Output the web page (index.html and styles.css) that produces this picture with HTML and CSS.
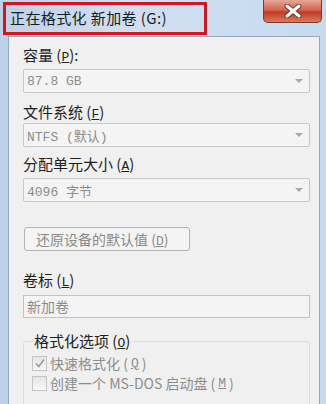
FILE: index.html
```html
<!DOCTYPE html>
<html lang="zh-CN">
<head>
  <meta charset="UTF-8" />
  <title>格式化 新加卷 (G:)</title>
  <link rel="stylesheet" href="styles.css">
</head>
<body>
  <div class="window">
    <div class="titlebar">
      <span class="title">正在格式化 新加卷 (G:)</span>
      <div class="close">
        <svg width="22" height="14" viewBox="0 0 22 14">
          <path d="M5 2 L17 12 M17 2 L5 12" stroke="#6b3a34" stroke-width="5" stroke-linecap="round"/>
          <path d="M5 2 L17 12 M17 2 L5 12" stroke="#ffffff" stroke-width="3" stroke-linecap="round"/>
        </svg>
      </div>
    </div>

    <div class="client">
      <label class="field-label">容量 (<u>P</u>):</label>
      <div class="combo"><span>87.8 GB</span><i class="arrow"></i></div>

      <label class="field-label gap-l">文件系统 (<u>F</u>)</label>
      <div class="combo tight"><span>NTFS (默认)</span><i class="arrow"></i></div>

      <label class="field-label gap-m">分配单元大小 (<u>A</u>)</label>
      <div class="combo"><span>4096 字节</span><i class="arrow"></i></div>

      <div class="btn">还原设备的默认值 (<u>D</u>)</div>

      <label class="field-label gap-xl">卷标 (<u>L</u>)</label>
      <div class="textbox">新加卷</div>

      <fieldset class="options">
        <legend>格式化选项 (<u>O</u>)</legend>
        <div class="check-row">
          <span class="box">
            <svg width="12" height="12" viewBox="0 0 12 12"><path d="M2 6.5 L4.8 9.5 L10 2.5" fill="none" stroke="#9a9a9a" stroke-width="1.6"/></svg>
          </span>
          快速格式化 (<u>Q</u>)
        </div>
        <div class="check-row">
          <span class="box"></span>
          创建一个 MS-DOS 启动盘 (<u>M</u>)
        </div>
      </fieldset>
    </div>
  </div>
</body>
</html>
```

FILE: styles.css
```css
body {
  margin: 0;
  background: #c9dbef;
  font-family: "Noto Sans CJK SC", "Noto Sans", sans-serif;
}
.window {
  width: 326px;
  height: 404px;
  overflow: hidden;
  background: linear-gradient(to right, #bcd2ea, #d0e0f2 40%, #c7daee);
}
.titlebar {
  height: 36px;
  display: flex;
  align-items: flex-start;
  justify-content: space-between;
}
.title {
  margin: 2px 0 0 3px;
  width: 194px;
  height: 27px;
  border: 3px solid #d3151f;
  padding-left: 4px;
  font-size: 15px;
  line-height: 26px;
  color: #1b1b1b;
  letter-spacing: 0.4px;
}
.close {
  width: 57px;
  height: 22px;
  margin-right: 4px;
  border: 1px solid #7a3a2e;
  border-top: none;
  border-radius: 0 0 5px 5px;
  background: linear-gradient(#e7a697, #d2664f 45%, #c33a22 55%, #d97a5e);
  display: flex;
  align-items: center;
  justify-content: center;
}
.client {
  margin: 0 6px 0 8px;
  height: 368px;
  border: 1px solid #9aaabd;
  background: #f0f0f0;
  padding: 8px 11px 0 14px;
  display: flex;
  flex-direction: column;
  align-items: flex-start;
}
.field-label {
  height: 20px;
  font-size: 15px;
  line-height: 20px;
  color: #1e1e1e;
}
.field-label u, .btn u, legend u, .check-row u {
  font-family: "Liberation Mono", monospace;
  font-size: 13px;
  line-height: 1;
}
.gap-l { margin-top: 9px; }
.gap-m { margin-top: 7px; }
.gap-xl { margin-top: 19px; }
.combo {
  box-sizing: border-box;
  width: 287px;
  height: 24px;
  flex-shrink: 0;
  margin-top: 4px;
  border: 1px solid #c9c9c9;
  border-radius: 2px;
  background: #f4f4f4;
  display: flex;
  align-items: center;
  justify-content: space-between;
  padding: 0 6px 0 3px;
  font-family: "Liberation Mono", "Noto Sans CJK SC", monospace;
  font-size: 13px;
  color: #8d8d8d;
}
.combo.tight { margin-top: 1px; }
.arrow {
  width: 0;
  height: 0;
  border-left: 4px solid transparent;
  border-right: 4px solid transparent;
  border-top: 4px solid #a8a8a8;
}
.btn {
  box-sizing: border-box;
  width: 166px;
  height: 24px;
  flex-shrink: 0;
  margin: 25px 0 0 1px;
  border: 1px solid #b4b4b4;
  border-radius: 3px;
  background: #f4f4f4;
  padding-left: 11px;
  font-size: 14px;
  line-height: 22px;
  color: #8a8a8a;
}
.textbox {
  box-sizing: border-box;
  width: 287px;
  height: 23px;
  flex-shrink: 0;
  margin-top: 5px;
  border: 1px solid #c2c2c2;
  background: #f4f4f4;
  padding-left: 3px;
  font-size: 14px;
  line-height: 21px;
  color: #8d8d8d;
}
.options {
  box-sizing: border-box;
  width: 287px;
  flex-shrink: 0;
  margin: 13px 0 0;
  padding: 2px 8px 14px;
  border: 1px solid #d7dde3;
  border-radius: 3px;
}
legend {
  height: 20px;
  padding: 0 2px;
  margin-left: 0;
  font-size: 15px;
  line-height: 20px;
  color: #222;
}
.check-row {
  height: 20px;
  display: flex;
  align-items: center;
  gap: 3px;
  font-size: 14px;
  color: #8d8d8d;
}
.box {
  box-sizing: border-box;
  width: 15px;
  height: 15px;
  border: 1px solid #c4c4c4;
  background: linear-gradient(#e6e6e6, #f7f7f7);
  display: flex;
  align-items: center;
  justify-content: center;
}
```
